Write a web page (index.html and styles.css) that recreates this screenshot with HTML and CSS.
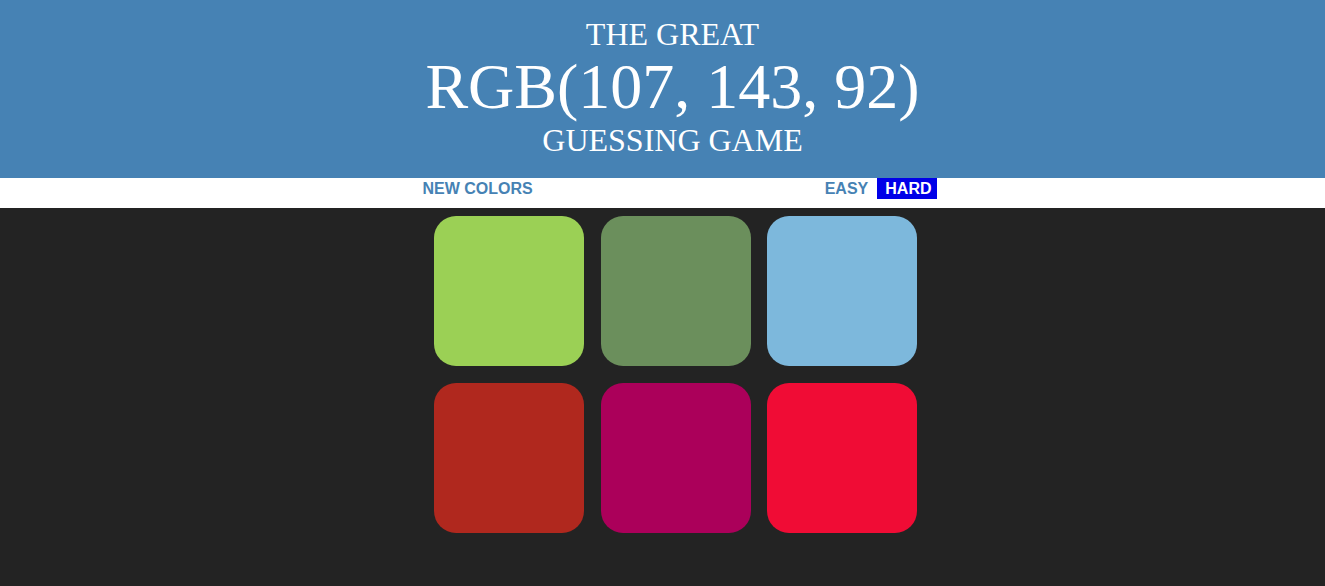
FILE: index.html
```html
<!DOCTYPE html>
<html lang="en">
<head>
<meta charset="utf-8">
<title>Color Game</title>
<link rel="stylesheet" href="styles.css">
</head>
<body>
  <h1 class="title">
    <span class="title-line">The Great</span>
    <span class="title-line color-display">RGB(107, 143, 92)</span>
    <span class="title-line">Guessing Game</span>
  </h1>
  <div class="stripe">
    <div class="stripe-inner">
      <button class="btn">New Colors</button>
      <span class="message"></span>
      <div class="modes">
        <button class="btn mode">Easy</button>
        <button class="btn mode selected">Hard</button>
      </div>
    </div>
  </div>
  <div class="board">
    <div class="square sq1"></div>
    <div class="square sq2"></div>
    <div class="square sq3"></div>
    <div class="square sq4"></div>
    <div class="square sq5"></div>
    <div class="square sq6"></div>
  </div>
</body>
</html>
```
FILE: styles.css
```css
html, body {
  margin: 0;
  padding: 0;
}
body {
  background: #232323;
  font-family: "Liberation Serif", "Times New Roman", serif;
  min-height: 586px;
}
.title {
  margin: 0;
  padding: 17px 0 20px 20px;
  background: #4682b4;
  color: #ffffff;
  text-align: center;
  font-weight: normal;
  font-size: 32px;
  line-height: 1.1;
  text-transform: uppercase;
}
.title-line {
  display: block;
}
.color-display {
  font-size: 64px;
}
.stripe {
  background: #ffffff;
  height: 30px;
}
.stripe-inner {
  width: 515px;
  margin-left: calc(50% - 240px);
  display: flex;
  align-items: flex-start;
  justify-content: space-between;
}
.btn {
  border: none;
  background: none;
  margin: 0;
  padding: 0 6px 0 7px;
  height: 21px;
  line-height: 21px;
  font-family: "Liberation Sans", Arial, sans-serif;
  font-size: 16px;
  font-weight: 700;
  text-transform: uppercase;
  color: #4682b4;
  cursor: pointer;
}
.stripe-inner > .btn {
  padding-left: 0;
}
.modes {
  display: flex;
  gap: 3px;
}
.mode.selected {
  background: #0000e8;
  color: #ffffff;
  padding: 0 6px 0 8px;
}
.board {
  width: 483px;
  margin: 8px 0 0 calc(50% - 228.5px);
  display: grid;
  grid-template-columns: repeat(3, 150px);
  grid-auto-rows: 150px;
  column-gap: 16.5px;
  row-gap: 17px;
}
.square {
  border-radius: 22px;
}
.sq1 { background: #9bd055; }
.sq2 { background: #6b8f5c; }
.sq3 { background: #7db8dc; }
.sq4 { background: #b0281e; }
.sq5 { background: #ab005a; }
.sq6 { background: #f00c35; }
```
